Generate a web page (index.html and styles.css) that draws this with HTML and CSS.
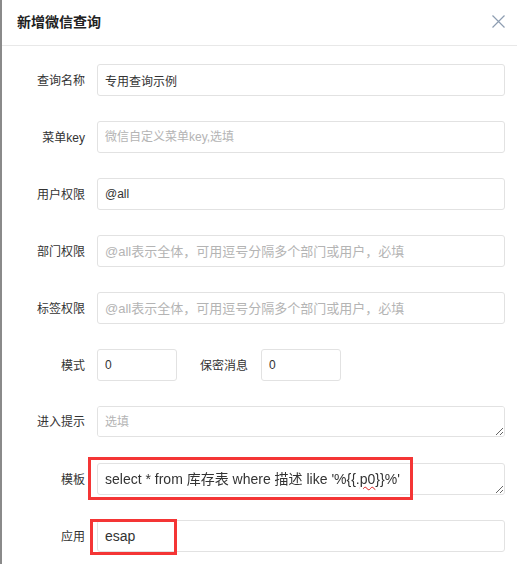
FILE: index.html
```html
<!DOCTYPE html>
<html lang="zh">
<head>
<meta charset="utf-8">
<title>新增微信查询</title>
<link rel="stylesheet" href="styles.css">
</head>
<body>
<div class="page">
  <div class="edge"></div>
  <div class="dialog">
    <div class="header">
      <span class="title">新增微信查询</span>
      <span class="close">
        <svg width="13" height="13" viewBox="0 0 13 13"><path d="M0.5 0.5 L12.5 12.5 M12.5 0.5 L0.5 12.5" stroke="#8d9db1" stroke-width="1.2" fill="none"/></svg>
      </span>
    </div>
    <div class="form">
      <div class="row">
        <label class="lbl">查询名称</label>
        <input class="inp" type="text" value="专用查询示例">
      </div>
      <div class="row">
        <label class="lbl">菜单key</label>
        <input class="inp" type="text" placeholder="微信自定义菜单key,选填">
      </div>
      <div class="row">
        <label class="lbl">用户权限</label>
        <input class="inp" type="text" value="@all">
      </div>
      <div class="row">
        <label class="lbl">部门权限</label>
        <input class="inp wide-ph" type="text" placeholder="@all表示全体，可用逗号分隔多个部门或用户，必填">
      </div>
      <div class="row">
        <label class="lbl">标签权限</label>
        <input class="inp wide-ph" type="text" placeholder="@all表示全体，可用逗号分隔多个部门或用户，必填">
      </div>
      <div class="row">
        <label class="lbl">模式</label>
        <input class="inp small" type="text" value="0">
        <label class="lbl2">保密消息</label>
        <input class="inp small" type="text" value="0">
      </div>
      <div class="row tall">
        <label class="lbl">进入提示</label>
        <textarea class="inp area" placeholder="选填"></textarea>
      </div>
      <div class="row">
        <label class="lbl">模板</label>
        <div class="inp area big">select * from 库存表 where 描述 like '%{{.<span class="spell">p0</span>}}%'</div>
        <div class="mark mark-tpl"></div>
      </div>
      <div class="row short">
        <label class="lbl">应用</label>
        <input class="inp big" type="text" value="esap">
        <div class="mark mark-app"></div>
      </div>
    </div>
  </div>
</div>
</body>
</html>
```

FILE: styles.css
```css
html, body {
  margin: 0;
  padding: 0;
  background: #fff;
}
body {
  font-family: "Liberation Sans", "Noto Sans CJK SC", sans-serif;
  color: #333;
  width: 517px;
  height: 564px;
  overflow: hidden;
}
.page {
  display: flex;
  height: 564px;
}
.edge {
  width: 2px;
  background: #8a8a8a;
  flex: none;
}
.dialog {
  flex: 1;
  background: #fff;
}
.header {
  height: 45px;
  border-bottom: 1px solid #e8e8e8;
  display: flex;
  align-items: center;
  justify-content: space-between;
  padding: 0 12px 0 15px;
}
.title {
  font-size: 14px;
  font-weight: bold;
  color: #222;
  margin-top: -4px;
}
.close {
  display: flex;
  margin-top: -2px;
}
.form {
  padding: 18px 12px 0 0;
}
.row {
  position: relative;
  display: flex;
  align-items: center;
  gap: 12px;
  margin-bottom: 25px;
}
.row.tall {
  margin-bottom: 26px;
}
.lbl {
  width: 83px;
  text-align: right;
  font-size: 12px;
  color: #333;
  flex: none;
  margin-top: -2px;
}
.lbl2 {
  font-size: 12px;
  color: #333;
  margin-left: 11px;
  margin-right: 1px;
  margin-top: -2px;
}
.inp {
  box-sizing: border-box;
  height: 32px;
  flex: 1;
  border: 1px solid #e2e2e2;
  border-radius: 3px;
  padding: 0 7px;
  font-family: "Liberation Sans", "Noto Sans CJK SC", sans-serif;
  font-size: 12px;
  color: #333;
  background: #fff;
  outline: none;
}
.inp::placeholder {
  color: #b4b4b4;
}
.inp.wide-ph {
  font-size: 13px;
}
.inp.small {
  flex: none;
  width: 80px;
}
.inp.area {
  resize: vertical;
  overflow: auto;
  padding: 7px 7px;
  line-height: 16px;
  height: 31px;
}
.inp.big {
  font-size: 14px;
}
div.inp.area.big {
  height: 32px;
  padding: 5px 7px;
  line-height: 20px;
  white-space: nowrap;
}
.spell {
  text-decoration: underline wavy #e02020;
  text-decoration-thickness: 1px;
  text-underline-offset: 2px;
}
.mark {
  position: absolute;
  border: 3px solid #f43535;
  box-sizing: border-box;
  pointer-events: none;
}
.mark-tpl {
  left: 86px;
  top: -6px;
  width: 325px;
  height: 43px;
}
.mark-app {
  left: 88px;
  top: -1px;
  width: 87px;
  height: 36px;
}
```
